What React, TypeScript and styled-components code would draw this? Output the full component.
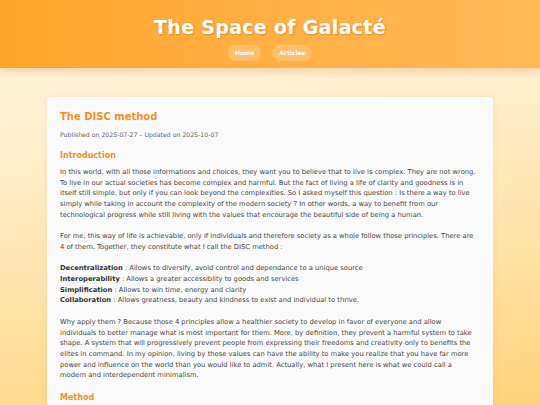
import React from "react";
import styled, { createGlobalStyle } from "styled-components";

const GlobalStyle = createGlobalStyle`
  html, body {
    margin: 0;
    padding: 0;
  }
  body {
    min-height: 100vh;
    font-family: "DejaVu Sans", Verdana, sans-serif;
    background: linear-gradient(172deg, #fff6e3 0%, #ffefcf 30%, #ffe3a8 65%, #ffd27b 100%);
    background-attachment: fixed;
    overflow: hidden;
  }
`;

const Page = styled.div`
  display: flex;
  flex-direction: column;
  height: 100vh;
  overflow: hidden;
`;

const Header = styled.header`
  display: flex;
  flex-direction: column;
  align-items: center;
  flex-shrink: 0;
  height: 68px;
  box-sizing: border-box;
  padding-top: 15px;
  background: linear-gradient(90deg, #ffa42a 0%, #ffb24a 60%, #ffb957 100%);
  box-shadow: 0 3px 8px rgba(200, 130, 40, 0.3);
  position: relative;
  z-index: 1;
`;

const SiteTitle = styled.h1`
  margin: 0;
  font-size: 19px;
  font-weight: bold;
  line-height: 24px;
  color: #fff;
  letter-spacing: 0.3px;
  text-shadow: 1px 1px 2px rgba(150, 80, 0, 0.35);
`;

const Nav = styled.nav`
  display: flex;
  gap: 11px;
  margin-top: 6px;
`;

const NavLink = styled.a`
  display: inline-block;
  padding: 3px 7px;
  border-radius: 8px;
  background: rgba(255, 255, 255, 0.2);
  color: #fff;
  font-size: 6px;
  font-weight: bold;
  line-height: 10px;
  text-decoration: none;
`;

const Main = styled.main`
  padding: 29px 47px 0;
`;

const Card = styled.article`
  background: #fafafa;
  border-radius: 4px;
  padding: 13px 13.5px 20px 13px;
  box-shadow: 0 1px 6px rgba(200, 140, 60, 0.15);
  color: #464646;
`;

const ArticleTitle = styled.h2`
  margin: 0;
  font-size: 10px;
  font-weight: bold;
  color: #f2901c;
  line-height: 14px;
`;

const Meta = styled.p`
  margin: 7px 0 0;
  font-size: 6.2px;
  color: #666;
  line-height: 8px;
`;

const SectionTitle = styled.h3`
  margin: 11px 0 5px;
  font-size: 8px;
  font-weight: bold;
  color: #f2901c;
  line-height: 12px;
`;

const Paragraph = styled.p`
  margin: 0 0 10.7px;
  font-size: 6.75px;
  line-height: 10.7px;
`;

const Term = styled.strong`
  color: #333;
`;

const principles = [
  ["Decentralization", "Allows to diversify, avoid control and dependance to a unique source"],
  ["Interoperability", "Allows a greater accessiblity to goods and services"],
  ["Simplification", "Allows to win time, energy and clarity"],
  ["Collaboration", "Allows greatness, beauty and kindness to exist and individual to thrive."],
];

export default function App() {
  return (
    <>
      <GlobalStyle />
      <Page>
        <Header>
          <SiteTitle>The Space of Galacté</SiteTitle>
          <Nav>
            <NavLink href="#">Home</NavLink>
            <NavLink href="#">Articles</NavLink>
          </Nav>
        </Header>
        <Main>
          <Card>
            <ArticleTitle>The DISC method</ArticleTitle>
            <Meta>Published on 2025-07-27 – Updated on 2025-10-07</Meta>

            <SectionTitle>Introduction</SectionTitle>
            <Paragraph>
              In this world, with all those informations and choices, they want you to believe that to live is
              complex. They are not wrong. To live in our actual societies has become complex and harmful. But the
              fact of living a life of clarity and goodness is in itself still simple, but only if you can look
              beyond the complexities. So I asked myself this question : Is there a way to live simply while taking
              in account the complexity of the modern society ? In other words, a way to benefit from our
              technological progress while still living with the values that encourage the beautiful side of being
              a human.
            </Paragraph>
            <Paragraph>
              For me, this way of life is achievable, only if individuals and therefore society as a whole follow
              those principles. There are 4 of them. Together, they constitute what I call the DISC method :
            </Paragraph>
            <Paragraph>
              {principles.map(([term, desc], i) => (
                <React.Fragment key={term}>
                  <Term>{term}</Term> : {desc}
                  {i < principles.length - 1 && <br />}
                </React.Fragment>
              ))}
            </Paragraph>
            <Paragraph>
              Why apply them ? Because those 4 principles allow a healthier society to develop in favor of everyone
              and allow individuals to better manage what is most important for them. More, by definition, they
              prevent a harmful system to take shape. A system that will progressively prevent people from
              expressing their freedoms and creativity only to benefits the elites in command. In my opinion, living
              by those values can have the ability to make you realize that you have far more power and influence on
              the world than you would like to admit. Actually, what I present here is what we could call a modern
              and interdependent minimalism.
            </Paragraph>

            <SectionTitle>Method</SectionTitle>
          </Card>
        </Main>
      </Page>
    </>
  );
}
